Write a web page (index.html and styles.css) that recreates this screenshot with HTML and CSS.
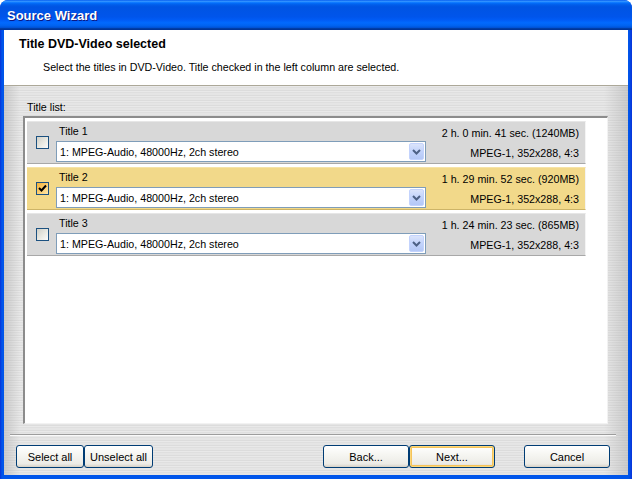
FILE: index.html
```html
<!DOCTYPE html>
<html lang="en">
<head>
  <meta charset="UTF-8">
  <title>Source Wizard</title>
  <link rel="stylesheet" href="styles.css">
</head>
<body>
  <div class="window">
    <!-- Title bar -->
    <div class="title-bar">Source Wizard</div>

    <div class="client">
      <!-- Header -->
      <div class="header">
        <div class="header-title">Title DVD-Video selected</div>
        <div class="header-text">Select the titles in DVD-Video. Title checked in the left column are selected.</div>
      </div>

      <!-- Body -->
      <div class="body">
        <div class="list-label">Title list:</div>
        <div class="list-box">
          <div class="row">
            <span class="check"></span>
            <div class="row-main">
              <div class="row-title">Title 1</div>
              <div class="combo">
                <span class="combo-text">1: MPEG-Audio, 48000Hz, 2ch stereo</span>
                <span class="combo-btn"><svg width="9" height="6" viewBox="0 0 9 6"><path d="M1 1 L4.5 4.5 L8 1" fill="none" stroke="#4d6185" stroke-width="2"/></svg></span>
              </div>
            </div>
            <div class="row-info">
              <div>2 h. 0 min. 41 sec. (1240MB)</div>
              <div>MPEG-1, 352x288, 4:3</div>
            </div>
          </div>

          <div class="row selected">
            <span class="check checked"><svg width="11" height="11" viewBox="0 0 11 11"><path d="M2 5 L4.5 7.5 L9 2.5" fill="none" stroke="#000" stroke-width="2"/></svg></span>
            <div class="row-main">
              <div class="row-title">Title 2</div>
              <div class="combo">
                <span class="combo-text">1: MPEG-Audio, 48000Hz, 2ch stereo</span>
                <span class="combo-btn"><svg width="9" height="6" viewBox="0 0 9 6"><path d="M1 1 L4.5 4.5 L8 1" fill="none" stroke="#4d6185" stroke-width="2"/></svg></span>
              </div>
            </div>
            <div class="row-info">
              <div>1 h. 29 min. 52 sec. (920MB)</div>
              <div>MPEG-1, 352x288, 4:3</div>
            </div>
          </div>

          <div class="row">
            <span class="check"></span>
            <div class="row-main">
              <div class="row-title">Title 3</div>
              <div class="combo">
                <span class="combo-text">1: MPEG-Audio, 48000Hz, 2ch stereo</span>
                <span class="combo-btn"><svg width="9" height="6" viewBox="0 0 9 6"><path d="M1 1 L4.5 4.5 L8 1" fill="none" stroke="#4d6185" stroke-width="2"/></svg></span>
              </div>
            </div>
            <div class="row-info">
              <div>1 h. 24 min. 23 sec. (865MB)</div>
              <div>MPEG-1, 352x288, 4:3</div>
            </div>
          </div>
        </div>

        <div class="separator"></div>

        <!-- Buttons -->
        <div class="buttons">
          <div class="btn-group">
            <button class="btn w68">Select all</button>
            <button class="btn w69">Unselect all</button>
          </div>
          <div class="btn-group">
            <button class="btn w86">Back...</button>
            <button class="btn w86 default">Next...</button>
            <button class="btn w86 cancel">Cancel</button>
          </div>
        </div>
      </div>
    </div>
  </div>
</body>
</html>
```

FILE: styles.css
```css
* {
  margin: 0;
  padding: 0;
  box-sizing: border-box;
}
body {
  font-family: "Liberation Sans", Arial, sans-serif;
  font-size: 10.7px;
  color: #000;
  background: #fff;
  width: 632px;
  height: 479px;
  overflow: hidden;
}
/* Window frame */
.window {
  width: 632px;
  height: 479px;
  display: flex;
  flex-direction: column;
  background: linear-gradient(to right, #0831d9 0, #0055ea 2px, #0055ea 629px, #0831d9 632px);
  border-radius: 8px 8px 0 0;
  overflow: hidden;
}
.title-bar {
  height: 30px;
  flex: none;
  padding: 0 7px;
  display: flex;
  align-items: center;
  color: #fff;
  font-weight: bold;
  font-size: 13px;
  text-shadow: 1px 1px 0 #0a1883;
  background: linear-gradient(to bottom, #0058ee 0%, #3593ff 4%, #288eff 6%, #127dff 8%, #036ffc 10%, #0262ee 14%, #0057e5 20%, #0054e3 24%, #0055eb 56%, #005bf5 66%, #026afe 76%, #0062ef 86%, #0052d6 92%, #0040ab 94%, #003092 100%);
}
.client {
  flex: 1;
  margin: 0 4px 4px 4px;
  display: flex;
  flex-direction: column;
  background: #fff;
}
/* White header */
.header {
  height: 56px;
  flex: none;
  background: #fff;
  border-bottom: 1px solid #aca899;
  padding: 7px 0 0 15px;
}
.header-title {
  font-weight: bold;
  font-size: 12.5px;
  line-height: 14px;
}
.header-text {
  margin: 10px 0 0 24px;
  line-height: 13px;
}
/* Brushed metal body */
.body {
  flex: 1;
  display: flex;
  flex-direction: column;
  padding: 15px 20px 0 19px;
  background:
    linear-gradient(to right, rgba(150,150,150,0.35) 0, rgba(150,150,150,0) 16px, rgba(255,255,255,0) 600px, rgba(150,150,150,0.35) 624px),
    repeating-linear-gradient(to bottom, #e9e9e9 0, #e9e9e9 1px, #dfdfdf 1px, #dfdfdf 2px, #e5e5e5 2px, #e5e5e5 4px, #dcdcdc 4px, #dcdcdc 5px);
}
.list-label {
  padding-left: 4px;
  line-height: 13px;
  height: 15px;
}
.list-box {
  height: 308px;
  background: #fff;
  border-top: 2px solid #8c8c8c;
  border-left: 2px solid #8c8c8c;
  border-right: 1px solid #f2f2f2;
  border-bottom: 1px solid #f2f2f2;
  padding: 3px 0 0 2px;
  display: flex;
  flex-direction: column;
  gap: 3px;
}
/* Title rows */
.row {
  width: 559px;
  height: 43px;
  display: flex;
  align-items: flex-start;
  background: #d8d8d8;
  border-top: 1px solid #e6e6e6;
  border-bottom: 1px solid #a8a8a8;
  border-right: 1px solid #f4f4f4;
}
.row.selected {
  background: #f2d98a;
  border-top-color: #f6e3a6;
  border-bottom-color: #cdb467;
}
.check {
  width: 13px;
  height: 13px;
  margin: 14px 0 0 9px;
  border: 1px solid #1c5180;
  background: linear-gradient(135deg, #d0d0c8 0%, #ececE6 60%, #fbfbfb 100%);
  display: flex;
  align-items: center;
  justify-content: center;
}
.check.checked {
  background: linear-gradient(135deg, #f5b032 0%, #fbd27a 60%, #fde6aa 100%);
}
.row-main {
  width: 370px;
  margin-left: 7px;
}
.row-title {
  height: 19px;
  padding: 2px 0 0 3px;
  line-height: 15px;
}
.combo {
  height: 21px;
  background: #fff;
  border: 1px solid #7f9db9;
  display: flex;
  align-items: center;
  justify-content: space-between;
  padding: 0 1px 0 3px;
}
.combo-btn {
  width: 15px;
  height: 17px;
  border-radius: 2px;
  background: linear-gradient(to bottom, #dbe4fb 0%, #c2d3fb 50%, #b4c8f6 100%);
  border: 1px solid #c3d3fd;
  display: flex;
  align-items: center;
  justify-content: center;
}
.row-info {
  flex: 1;
  text-align: right;
  padding: 1px 6px 0 0;
  line-height: 20px;
}
.separator {
  margin: 10px -8px 0 -13px;
  height: 2px;
  border-top: 1px solid #9d9d9d;
  border-bottom: 1px solid #fafafa;
}
/* Bottom buttons */
.buttons {
  display: flex;
  justify-content: space-between;
  margin: 9px -2px 0 -7px;
}
.btn-group {
  display: flex;
}
.btn {
  height: 23px;
  font-family: inherit;
  font-size: 11px;
  color: #000;
  border: 1px solid #003c74;
  border-radius: 3px;
  background: linear-gradient(to bottom, #fff 0%, #f6f6f2 40%, #ecebe6 85%, #d6d0c5 100%);
}
.w68 { width: 68px; }
.w69 { width: 69px; }
.w86 { width: 86px; }
.btn.default {
  box-shadow: inset 0 0 0 1px #fbd77a, inset 0 0 0 2px #f5c35a;
}
.btn.cancel {
  margin-left: 29px;
}
```
